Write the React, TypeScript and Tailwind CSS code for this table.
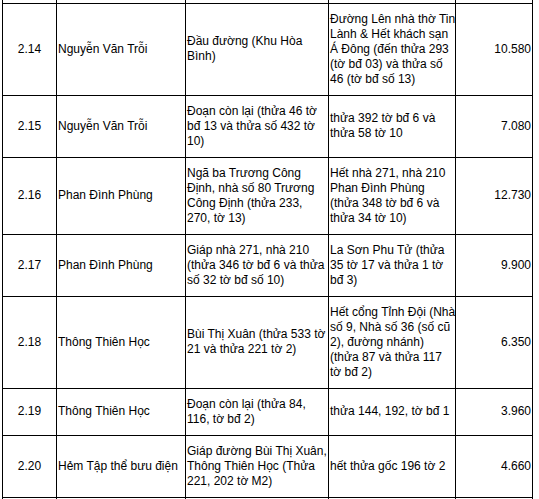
import React from "react";

type Row = { no: string; name: string; from: string[]; to: string[]; price: string };

const rows: Row[] = [
  {
    no: "2.14",
    name: "Nguyễn Văn Trỗi",
    from: ["Đầu đường (Khu Hòa", "Bình)"],
    to: ["Đường Lên nhà thờ Tin", "Lành & Hết khách sạn", "Á Đông (đến thửa 293", "(tờ bđ 03) và thửa số", "46 (tờ bđ số 13)"],
    price: "10.580",
  },
  {
    no: "2.15",
    name: "Nguyễn Văn Trỗi",
    from: ["Đoạn còn lại (thửa 46 tờ", "bđ 13 và thửa số 432 tờ", "10)"],
    to: ["thửa 392 tờ bđ 6 và", "thửa 58 tờ 10"],
    price: "7.080",
  },
  {
    no: "2.16",
    name: "Phan Đình Phùng",
    from: ["Ngã ba Trương Công", "Định, nhà số 80 Trương", "Công Định (thửa 233,", "270, tờ 13)"],
    to: ["Hết nhà 271, nhà 210", "Phan Đình Phùng", "(thửa 348 tờ bđ 6 và", "thửa 34 tờ 10)"],
    price: "12.730",
  },
  {
    no: "2.17",
    name: "Phan Đình Phùng",
    from: ["Giáp nhà 271, nhà 210", "(thửa 346 tờ bđ 6 và thửa", "số 32 tờ bđ số 10)"],
    to: ["La Sơn Phu Tử (thửa", "35 tờ 17 và thửa 1 tờ", "bđ 3)"],
    price: "9.900",
  },
  {
    no: "2.18",
    name: "Thông Thiên Học",
    from: ["Bùi Thị Xuân (thửa 533 tờ", "21 và thửa 221 tờ 2)"],
    to: ["Hết cổng Tỉnh Đội (Nhà", "số 9, Nhà số 36 (số cũ", "2), đường nhánh)", "(thửa 87 và thửa 117", "tờ bđ 2)"],
    price: "6.350",
  },
  {
    no: "2.19",
    name: "Thông Thiên Học",
    from: ["Đoạn còn lại (thửa 84,", "116, tờ bđ 2)"],
    to: ["thửa 144, 192, tờ bđ 1"],
    price: "3.960",
  },
  {
    no: "2.20",
    name: "Hẻm Tập thể bưu điện",
    from: ["Giáp đường Bùi Thị Xuân,", "Thông Thiên Học (Thửa", "221, 202 tờ M2)"],
    to: ["hết thửa gốc 196 tờ 2"],
    price: "4.660",
  },
];

function Lines({ lines }: { lines: string[] }) {
  return (
    <>
      {lines.map((l, i) => (
        <React.Fragment key={i}>
          {i > 0 && <br />}
          {l}
        </React.Fragment>
      ))}
    </>
  );
}

const cell = "border border-black px-[1px] py-[8px] align-middle whitespace-nowrap overflow-hidden";

export default function App() {
  return (
    <div className="w-[539px] h-[499px] overflow-hidden bg-white text-black">
      <table
        className="ml-[2px] border-collapse table-fixed w-[530px] text-[12px] leading-[15px]"
        style={{ fontFamily: '"Liberation Sans", Arial, sans-serif' }}
      >
        <colgroup>
          <col className="w-[54px]" />
          <col className="w-[129px]" />
          <col className="w-[143px]" />
          <col className="w-[127px]" />
          <col className="w-[77px]" />
        </colgroup>
        <tbody>
          <tr className="h-[3px]">
            <td className="border-x border-black p-0 h-[3px]"></td>
            <td className="border-x border-black p-0 h-[3px]"></td>
            <td className="border-x border-black p-0 h-[3px]"></td>
            <td className="border-x border-black p-0 h-[3px]"></td>
            <td className="border-x border-black p-0 h-[3px]"></td>
          </tr>
          {rows.map((r) => (
            <tr key={r.no}>
              <td className={`${cell} text-center`}>{r.no}</td>
              <td className={`${cell} text-left`}>{r.name}</td>
              <td className={`${cell} text-left`}>
                <Lines lines={r.from} />
              </td>
              <td className={`${cell} text-left`}>
                <Lines lines={r.to} />
              </td>
              <td className={`${cell} text-right`}>{r.price}</td>
            </tr>
          ))}
          <tr>
            <td className="border-x border-t border-black p-0 h-[20px]"></td>
            <td className="border-x border-t border-black p-0 h-[20px]"></td>
            <td className="border-x border-t border-black p-0 h-[20px]"></td>
            <td className="border-x border-t border-black p-0 h-[20px]"></td>
            <td className="border-x border-t border-black p-0 h-[20px]"></td>
          </tr>
        </tbody>
      </table>
    </div>
  );
}
